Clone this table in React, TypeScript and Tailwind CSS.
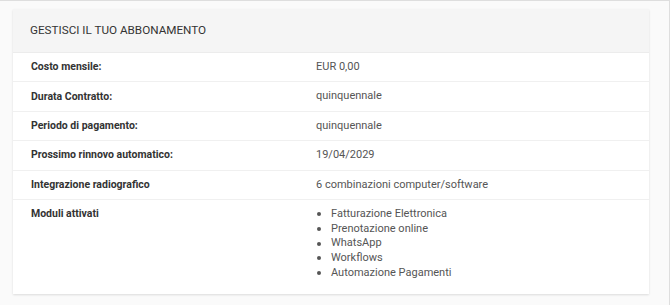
import React from 'react';

const rows: { label: string; value: string }[] = [
  { label: 'Costo mensile:', value: 'EUR 0,00' },
  { label: 'Durata Contratto:', value: 'quinquennale' },
  { label: 'Periodo di pagamento:', value: 'quinquennale' },
  { label: 'Prossimo rinnovo automatico:', value: '19/04/2029' },
  { label: 'Integrazione radiografico', value: '6 combinazioni computer/software' },
];

const modules = ['Fatturazione Elettronica', 'Prenotazione online', 'WhatsApp', 'Workflows', 'Automazione Pagamenti'];

export default function App() {
  return (
    <div
      className="w-[670px] h-[305px] bg-[#fafafa] border-t border-r border-[#dedede] pt-[8px] pl-[13px] pr-[20px] overflow-hidden"
      style={{ fontFamily: 'Roboto, "Liberation Sans", sans-serif' }}
    >
      <section className="bg-white shadow-[0_1px_2px_rgba(0,0,0,0.12)]">
        {/* HEADER */}
        <div className="h-[44px] bg-[#f5f5f5] flex items-center px-[17px] border-b border-[#ececec]">
          <h1 className="text-[11.7px] text-[#333] uppercase">Gestisci il tuo abbonamento</h1>
        </div>

        {/* ROWS */}
        {rows.map((r) => (
          <div key={r.label} className="flex items-center h-[29.4px] border-b border-[#f0f0f0]">
            <div className="w-[303px] pl-[18px] text-[10.5px] font-bold text-[#333]">{r.label}</div>
            <div className="text-[11px] text-[#555]">{r.value}</div>
          </div>
        ))}

        <div className="flex pt-[7px] pb-[14px]">
          <div className="w-[303px] pl-[18px] text-[10.5px] font-bold text-[#333] leading-[14.7px]">Moduli attivati</div>
          <ul className="text-[11px] text-[#555] leading-[14.7px]">
            {modules.map((m) => (
              <li key={m} className="flex items-center">
                <span className="w-[4px] h-[4px] rounded-full bg-[#555] ml-[1px] mr-[10px]" />
                {m}
              </li>
            ))}
          </ul>
        </div>
      </section>
    </div>
  );
}
